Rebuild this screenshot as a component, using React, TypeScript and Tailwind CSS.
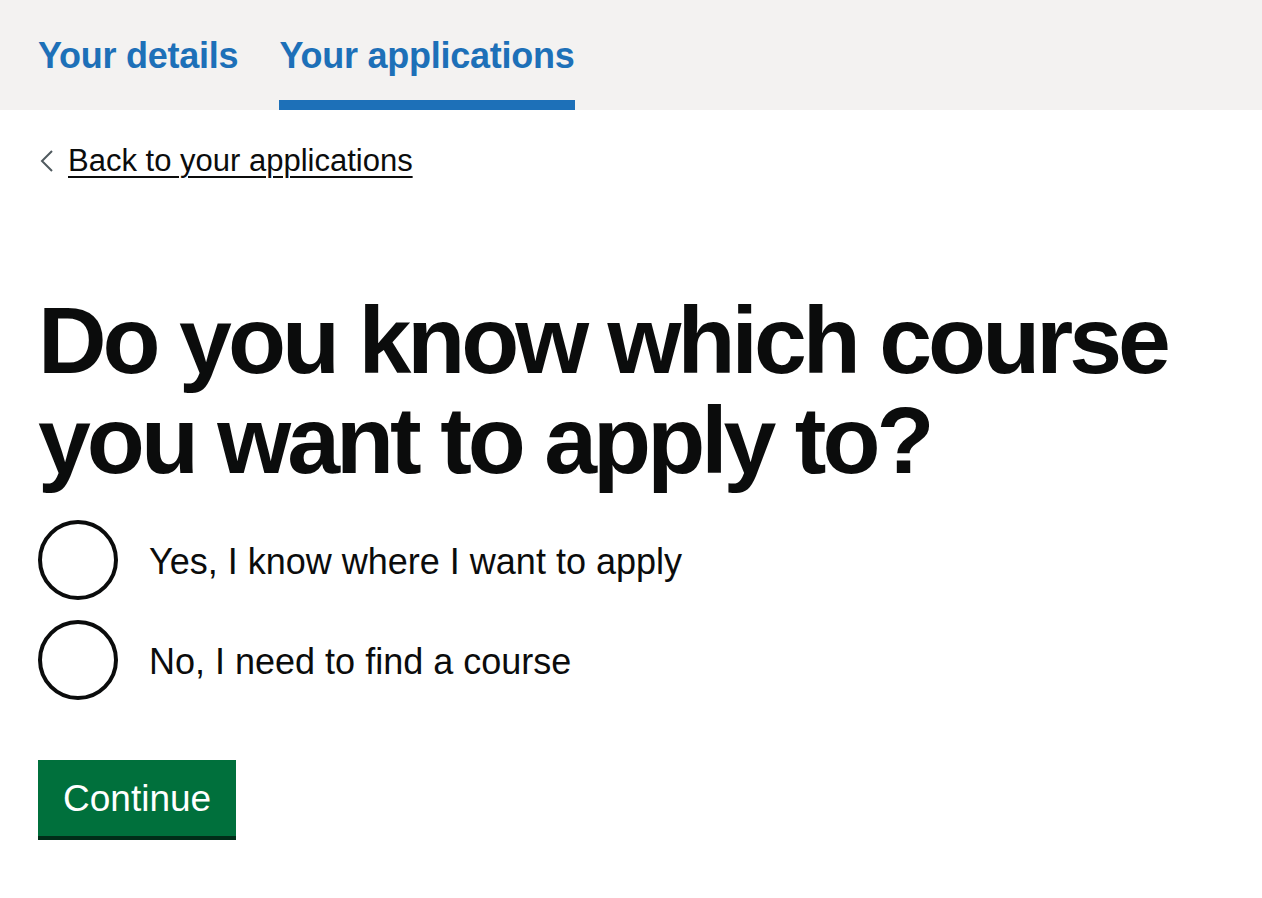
import { useState } from 'react';

const font = { fontFamily: '"Liberation Sans", Arial, sans-serif' };

const tabs = [
  { label: 'Your details', active: false },
  { label: 'Your applications', active: true },
];

const options = [
  { value: 'yes', label: 'Yes, I know where I want to apply' },
  { value: 'no', label: 'No, I need to find a course' },
];

const RadioItem = ({
  label,
  checked,
  onSelect,
}: {
  label: string;
  checked: boolean;
  onSelect: () => void;
}) => (
  <label className="flex cursor-pointer items-center gap-[31px]" onClick={onSelect}>
    <span className="flex h-[80px] w-[80px] shrink-0 items-center justify-center rounded-full border-[4px] border-[#0b0c0c] bg-white">
      {checked && <span className="h-[40px] w-[40px] rounded-full bg-[#0b0c0c]" />}
    </span>
    <span className="pt-[4px] text-[36px] leading-[1.25] text-[#0b0c0c]">{label}</span>
  </label>
);

export default function App() {
  const [choice, setChoice] = useState<string | null>(null);

  return (
    <div className="min-h-screen bg-white text-[#0b0c0c]" style={font}>
      {/* Sub navigation */}
      <nav className="bg-[#f3f2f1] px-[38px]">
        <ul className="flex gap-[41px]">
          {tabs.map((tab) => (
            <li
              key={tab.label}
              className={`border-b-[10px] pb-[22px] pt-[33px] ${
                tab.active ? 'border-[#1d70b8]' : 'border-transparent'
              }`}
            >
              <a
                href="#"
                className="text-[36px] font-bold leading-[1.25] tracking-[-0.25px] text-[#1d70b8] no-underline"
              >
                {tab.label}
              </a>
            </li>
          ))}
        </ul>
      </nav>

      <main className="px-[38px]">
        {/* Back link */}
        <div className="mt-[32px]">
          <a href="#" className="inline-flex items-center gap-[13px] text-[31px] leading-[1.25] text-[#0b0c0c]">
            <svg width="16" height="24" viewBox="0 0 16 24" className="ml-[1px]">
              <polyline points="13,2 3,12 13,22" fill="none" stroke="#505a5f" strokeWidth="2" />
            </svg>
            <span className="underline decoration-2 underline-offset-[5px]">Back to your applications</span>
          </a>
        </div>

        <h1 className="mt-[109px] max-w-[1186px] text-[95px] font-bold leading-[100px] tracking-[-0.042em]">
          Do you know which course you want to apply to?
        </h1>

        <div className="mt-[30px] flex flex-col gap-[20px]">
          {options.map((opt) => (
            <RadioItem
              key={opt.value}
              label={opt.label}
              checked={choice === opt.value}
              onSelect={() => setChoice(opt.value)}
            />
          ))}
        </div>

        <button
          type="button"
          className="mt-[60px] h-[76px] bg-[#00703c] px-[25px] pb-[14px] pt-[16px] text-[37px] leading-[1.25] text-white shadow-[0_4px_0_#002d18]"
        >
          Continue
        </button>
      </main>
    </div>
  );
}
